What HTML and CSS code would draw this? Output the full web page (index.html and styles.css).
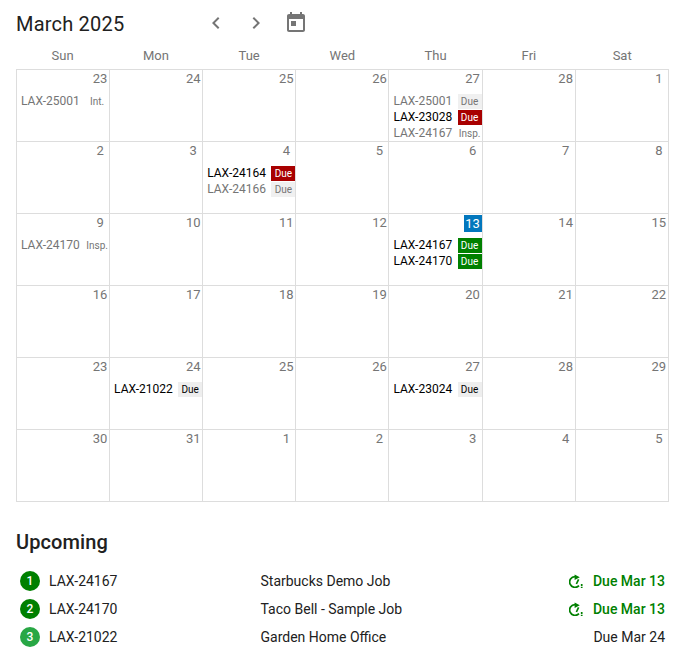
FILE: index.html
```html
<!DOCTYPE html>
<html lang="en">
<head>
<meta charset="utf-8">
<title>March 2025</title>
<link rel="stylesheet" href="styles.css">
</head>
<body>
<header class="toolbar">
  <h1 class="month">March 2025</h1>
  <div class="tools">
    <svg class="tool" viewBox="0 0 24 24"><path d="M15.41 7.41 14 6l-6 6 6 6 1.41-1.41L10.83 12z"/></svg>
    <svg class="tool" viewBox="0 0 24 24"><path d="M10 6 8.59 7.41 13.17 12l-4.58 4.59L10 18l6-6z"/></svg>
    <svg class="tool cal" viewBox="0 0 24 24"><path d="M19 4h-1V2h-2v2H8V2H6v2H5c-1.11 0-2 .9-2 2v14c0 1.1.89 2 2 2h14c1.1 0 2-.9 2-2V6c0-1.1-.9-2-2-2zm0 16H5V9h14v11zM7 11h5v5H7z"/></svg>
  </div>
</header>
<div class="weekdays">
  <div>Sun</div><div>Mon</div><div>Tue</div><div>Wed</div><div>Thu</div><div>Fri</div><div>Sat</div>
</div>
<div class="grid">
  <div class="cell"><div class="date"><span>23</span></div><div class="ev dim"><span>LAX-25001</span><b class="tag">Int.</b></div></div>
  <div class="cell"><div class="date"><span>24</span></div></div>
  <div class="cell"><div class="date"><span>25</span></div></div>
  <div class="cell"><div class="date"><span>26</span></div></div>
  <div class="cell"><div class="date"><span>27</span></div><div class="ev dim"><span>LAX-25001</span><b class="tag gray">Due</b></div><div class="ev"><span>LAX-23028</span><b class="tag red">Due</b></div><div class="ev dim"><span>LAX-24167</span><b class="tag">Insp.</b></div></div>
  <div class="cell"><div class="date"><span>28</span></div></div>
  <div class="cell"><div class="date"><span>1</span></div></div>

  <div class="cell"><div class="date"><span>2</span></div></div>
  <div class="cell"><div class="date"><span>3</span></div></div>
  <div class="cell"><div class="date"><span>4</span></div><div class="ev"><span>LAX-24164</span><b class="tag red">Due</b></div><div class="ev dim"><span>LAX-24166</span><b class="tag gray">Due</b></div></div>
  <div class="cell"><div class="date"><span>5</span></div></div>
  <div class="cell"><div class="date"><span>6</span></div></div>
  <div class="cell"><div class="date"><span>7</span></div></div>
  <div class="cell"><div class="date"><span>8</span></div></div>

  <div class="cell"><div class="date"><span>9</span></div><div class="ev dim"><span>LAX-24170</span><b class="tag">Insp.</b></div></div>
  <div class="cell"><div class="date"><span>10</span></div></div>
  <div class="cell"><div class="date"><span>11</span></div></div>
  <div class="cell"><div class="date"><span>12</span></div></div>
  <div class="cell"><div class="date"><span class="today">13</span></div><div class="ev"><span>LAX-24167</span><b class="tag green">Due</b></div><div class="ev"><span>LAX-24170</span><b class="tag green">Due</b></div></div>
  <div class="cell"><div class="date"><span>14</span></div></div>
  <div class="cell"><div class="date"><span>15</span></div></div>

  <div class="cell"><div class="date"><span>16</span></div></div>
  <div class="cell"><div class="date"><span>17</span></div></div>
  <div class="cell"><div class="date"><span>18</span></div></div>
  <div class="cell"><div class="date"><span>19</span></div></div>
  <div class="cell"><div class="date"><span>20</span></div></div>
  <div class="cell"><div class="date"><span>21</span></div></div>
  <div class="cell"><div class="date"><span>22</span></div></div>

  <div class="cell"><div class="date"><span>23</span></div></div>
  <div class="cell"><div class="date"><span>24</span></div><div class="ev"><span>LAX-21022</span><b class="tag gray dark">Due</b></div></div>
  <div class="cell"><div class="date"><span>25</span></div></div>
  <div class="cell"><div class="date"><span>26</span></div></div>
  <div class="cell"><div class="date"><span>27</span></div><div class="ev"><span>LAX-23024</span><b class="tag gray dark">Due</b></div></div>
  <div class="cell"><div class="date"><span>28</span></div></div>
  <div class="cell"><div class="date"><span>29</span></div></div>

  <div class="cell"><div class="date"><span>30</span></div></div>
  <div class="cell"><div class="date"><span>31</span></div></div>
  <div class="cell"><div class="date"><span>1</span></div></div>
  <div class="cell"><div class="date"><span>2</span></div></div>
  <div class="cell"><div class="date"><span>3</span></div></div>
  <div class="cell"><div class="date"><span>4</span></div></div>
  <div class="cell"><div class="date"><span>5</span></div></div>
</div>
<h2 class="heading">Upcoming</h2>
<ul class="list">
  <li class="row urgent">
    <span class="num">1</span><span class="code">LAX-24167</span><span class="job">Starbucks Demo Job</span>
    <span class="due"><svg class="clock" viewBox="0 0 14 14"><path d="M6 2.6A5.4 5.4 0 1 0 10 11.7"/><path class="fill" d="M5.6 .6 10.8 3.3 5.6 6z"/><path d="M9.6 5.4 7.4 10"/><path d="M12.7 10v2M12.7 12.8v1.2"/></svg><span class="due-text">Due Mar 13</span></span>
  </li>
  <li class="row urgent">
    <span class="num">2</span><span class="code">LAX-24170</span><span class="job">Taco Bell - Sample Job</span>
    <span class="due"><svg class="clock" viewBox="0 0 14 14"><path d="M6 2.6A5.4 5.4 0 1 0 10 11.7"/><path class="fill" d="M5.6 .6 10.8 3.3 5.6 6z"/><path d="M9.6 5.4 7.4 10"/><path d="M12.7 10v2M12.7 12.8v1.2"/></svg><span class="due-text">Due Mar 13</span></span>
  </li>
  <li class="row">
    <span class="num light">3</span><span class="code">LAX-21022</span><span class="job">Garden Home Office</span>
    <span class="due"><span class="due-text">Due Mar 24</span></span>
  </li>
</ul>
</body>
</html>
```
FILE: styles.css
```css
* { box-sizing: border-box; }
html, body { margin: 0; padding: 0; }
body {
  width: 693px;
  padding: 0 24px 0 16px;
  font-family: Roboto, "Liberation Sans", sans-serif;
  background: #fff;
  color: #212121;
  overflow: hidden;
}
.toolbar { display: flex; align-items: center; height: 46px; }
.month { margin: 0; padding-top: 2px; width: 188px; font-size: 20px; font-weight: 400; line-height: 24px; letter-spacing: 0.2px; }
.tools { display: flex; gap: 16px; }
.tool { width: 24px; height: 24px; fill: #757575; display: block; }
.tool.cal { transform: translateY(-1px); }
.weekdays { display: grid; grid-template-columns: repeat(7, 1fr); height: 23px; width: 652.8px; }
.weekdays div { text-align: center; font-size: 13px; line-height: 20px; color: #757575; }
.grid {
  display: grid;
  grid-template-columns: repeat(7, 1fr);
  grid-auto-rows: 72px;
  width: 652.8px;
  border-left: 1px solid #ddd;
  border-top: 1px solid #ddd;
}
.cell { border-right: 1px solid #ddd; border-bottom: 1px solid #ddd; padding-left: 4px; min-width: 0; }
.date { display: flex; justify-content: flex-end; height: 23px; }
.date span { width: 18px; height: 18px; text-align: center; font-size: 13px; line-height: 18px; color: #757575; }
.date .today { height: 17px; margin-top: 1px; line-height: 17px; background: #0277bd; color: #fff; }
.ev { display: flex; justify-content: space-between; align-items: center; height: 16px; font-size: 12px; line-height: 16px; color: #000; }
.ev.dim { color: #757575; }
.tag { width: 24px; height: 15px; text-align: center; font-size: 10px; font-weight: 400; line-height: 15px; white-space: nowrap; }
.tag.gray { background: #f0f0f0; }
.tag.dark { color: #000; background: #eee; }
.tag.red { background: #a80000; color: #fff; }
.tag.green { background: #008000; color: #fff; }
.heading { margin: 28px 0 0; font-size: 20px; font-weight: 500; line-height: 24px; letter-spacing: 0.1px; }
.list { list-style: none; margin: 13px 0 0; padding: 0; }
.row { display: flex; align-items: center; height: 28px; font-size: 14px; width: 649px; }
.num {
  width: 20px; height: 20px; margin-left: 4px; border-radius: 50%;
  background: #008000; color: #fff; font-size: 12px; font-weight: 500; line-height: 20px; text-align: center;
}
.num.light { background: #28a745; }
.code { margin-left: 9px; width: 211.5px; }
.job { flex: 1; }
.due { display: flex; align-items: center; gap: 10px; }
.urgent .due { color: #008000; font-weight: 500; }
.clock { width: 14px; height: 14px; fill: none; stroke: #008000; stroke-width: 1.7; display: block; }
.clock .fill { fill: #008000; stroke: none; }
```
